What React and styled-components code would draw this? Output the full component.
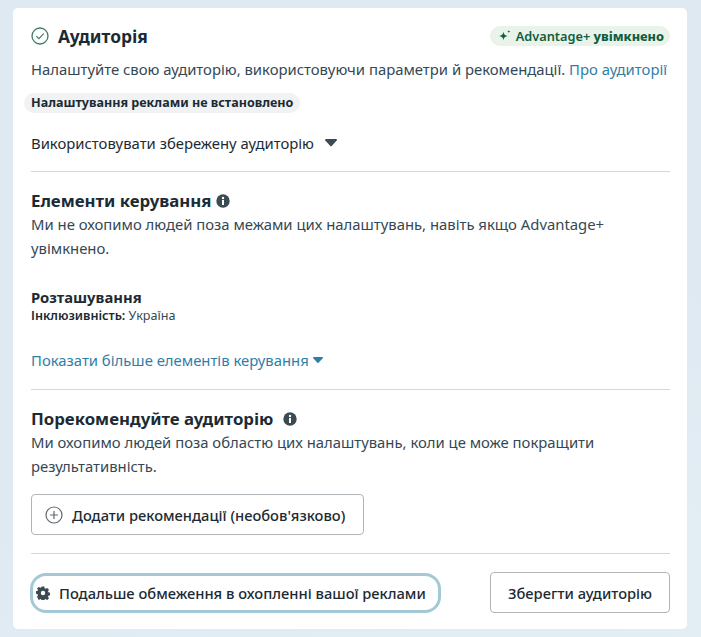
import React from 'react'
import styled, { createGlobalStyle } from 'styled-components'

const GlobalStyle = createGlobalStyle`
  html, body {
    margin: 0;
    height: 100%;
  }
  body {
    background: linear-gradient(160deg, #dfe9f2 0%, #dfe9f2 55%, #e3eef4 100%);
    font-family: "Noto Sans", "Open Sans", sans-serif;
    color: #1c2b33;
  }
`

const Page = styled.div`
  width: 701px;
  height: 637px;
  padding: 8px 14px 8px 13px;
  box-sizing: border-box;
`

const Card = styled.div`
  background: #fff;
  border-radius: 5px;
  height: 621px;
  box-sizing: border-box;
  padding: 16px 17px 0 18px;
`

const TitleRow = styled.div`
  display: flex;
  align-items: center;
  height: 24px;
`

const Title = styled.h2`
  margin: 0 0 0 9px;
  font-size: 17.4px;
  line-height: 24px;
  font-weight: 700;
  flex: 1;
`

const GreenPill = styled.div`
  display: flex;
  align-items: center;
  gap: 5px;
  height: 20px;
  padding: 0 6px 0 8px;
  border-radius: 10px;
  background: #e9f3ea;
  color: #0e5e3f;
  font-size: 12.75px;
  font-weight: 600;
`

const PillStrong = styled.span`
  font-weight: 800;
`

const Text = styled.p`
  margin: ${p => p.$margin || 0};
  font-size: 14.85px;
  line-height: 24px;
  color: #344854;
  white-space: nowrap;
`

const TextLink = styled.a`
  color: #2f7ea8;
  text-decoration: none;
`

const StatusPill = styled.div`
  display: inline-block;
  margin: 12px 0 0 -7px;
  padding: 0 7px;
  height: 20px;
  line-height: 20px;
  border-radius: 10px;
  background: #f0f2f4;
  font-size: 12.57px;
  font-weight: 700;
  white-space: nowrap;
`

const SavedRow = styled.div`
  display: flex;
  align-items: center;
  gap: 11px;
  margin-top: 18px;
  height: 24px;
  font-size: 14.85px;
  color: #1c2b33;
`

const Divider = styled.hr`
  border: 0;
  height: 1px;
  background: #d4d8dc;
  margin: ${p => p.$margin};
`

const Heading = styled.h3`
  display: flex;
  align-items: center;
  gap: ${p => p.$gap || 5}px;
  margin: 0;
  font-size: 16.8px;
  line-height: 22px;
  font-weight: 700;
`

const SubHeading = styled.div`
  margin-top: 27px;
  font-size: 14.8px;
  line-height: 20px;
  font-weight: 700;
`

const Note = styled.div`
  font-size: 12.6px;
  line-height: 18px;
  color: #344854;
`

const NoteLabel = styled.span`
  font-weight: 600;
  color: #1c2b33;
`

const ShowMore = styled.a`
  display: flex;
  align-items: center;
  gap: 4px;
  margin-top: 25px;
  font-size: 14.85px;
  line-height: 20px;
  color: #2f7ea8;
`

const OutlineButton = styled.button`
  display: flex;
  align-items: center;
  gap: 9px;
  box-sizing: border-box;
  height: 41px;
  margin-top: ${p => p.$top || 0}px;
  padding: 0 ${p => p.$right || 17}px 0 ${p => p.$left || 17}px;
  border: 1px solid #b0b5b9;
  border-radius: 4px;
  background: #fff;
  font-family: inherit;
  font-size: 14.7px;
  font-weight: 500;
  color: #1c2b33;
  white-space: nowrap;
`

const Footer = styled.div`
  display: flex;
  align-items: center;
  justify-content: space-between;
`

const FocusLink = styled.div`
  display: flex;
  align-items: center;
  gap: 9px;
  box-sizing: border-box;
  height: 40px;
  margin-left: -1px;
  padding: 0 12px 0 3px;
  border: 3px solid #a3c9d4;
  border-radius: 16px;
  font-size: 14.7px;
  font-weight: 500;
  white-space: nowrap;
`

const CheckIcon = () => (
  <svg width="18" height="18" viewBox="0 0 18 18" fill="none">
    <circle cx="9" cy="9" r="8" stroke="#3f7a66" strokeWidth="1.3" />
    <path d="M5.4 9.2l2.5 2.5 4.8-5" stroke="#3f7a66" strokeWidth="1.2" />
  </svg>
)

const SparkIcon = () => (
  <svg width="13" height="13" viewBox="0 0 12 12" fill="#0e5e3f">
    <path d="M5 1.5c.4 2.6 1.4 3.6 4 4-2.6.4-3.6 1.4-4 4-.4-2.600-1.400-3.600-4-4 2.600-.4 3.600-1.400 4-4z" />
    <path d="M10 0c.1.9.5 1.300 1.400 1.400-.9.1-1.300.5-1.400 1.400-.1-.9-.5-1.300-1.400-1.400.9-.1 1.300-.5 1.400-1.400z" />
  </svg>
)

const InfoIcon = () => (
  <svg width="14" height="14" viewBox="0 0 14 14">
    <circle cx="7" cy="7" r="6.7" fill="#3c4a52" />
    <circle cx="7" cy="4" r="1.2" fill="#fff" />
    <rect x="6" y="6" width="2" height="5" fill="#fff" />
  </svg>
)

const Caret = ({ color, w = 12 }) => (
  <svg width={w} height={w * 0.62} viewBox="0 0 12 7.4" fill={color}>
    <path d="M1 0h10c.8 0 1.200.9.7 1.500L6.700 7c-.4.4-1 .4-1.400 0L.3 1.500C-.2.9.2 0 1 0z" />
  </svg>
)

const PlusIcon = () => (
  <svg width="18" height="18" viewBox="0 0 18 18" fill="none" stroke="#5f6a71">
    <circle cx="9" cy="9" r="8" strokeWidth="1.2" />
    <path d="M9 5v8M5 9h8" strokeWidth="1.2" />
  </svg>
)

const GearIcon = () => (
  <svg width="14" height="14" viewBox="0 0 14 14">
    <path
      fill="#3c4a52"
      fillRule="evenodd"
      d="M5.700.5h2.600l.3 1.800 1 .5 1.600-.9 1.800 1.900-1 1.500.4 1 1.700.4v2.600l-1.700.4-.4 1 1 1.500-1.800 1.900-1.600-1-1 .5-.3 1.700H5.700l-.3-1.700-1-.5-1.600 1L1 10.700l1-1.500-.4-1-1.700-.4V5.200l1.700-.4.4-1-1-1.500L2.800.9l1.600.9 1-.5zM7 4.800a2.200 2.200 0 1 0 0 4.400 2.200 2.200 0 0 0 0-4.400z"
    />
  </svg>
)

export default function App() {
  return (
    <Page>
      <GlobalStyle />
      <Card>
        <TitleRow>
          <CheckIcon />
          <Title>Аудиторія</Title>
          <GreenPill>
            <SparkIcon />
            <span>
              Advantage+ <PillStrong>увімкнено</PillStrong>
            </span>
          </GreenPill>
        </TitleRow>
        <Text $margin="9px 0 0">
          Налаштуйте свою аудиторію, використовуючи параметри й рекомендації.{' '}
          <TextLink>Про аудиторії</TextLink>
        </Text>
        <StatusPill>Налаштування реклами не встановлено</StatusPill>
        <SavedRow>
          Використовувати збережену аудиторію
          <Caret color="#3c4a52" />
        </SavedRow>
        <Divider $margin="16px 0 18px" />
        <Heading>
          Елементи керування
          <InfoIcon />
        </Heading>
        <Text>
          Ми не охопимо людей поза межами цих налаштувань, навіть якщо Advantage+
          <br />
          увімкнено.
        </Text>
        <SubHeading>Розташування</SubHeading>
        <Note>
          <NoteLabel>Інклюзивність:</NoteLabel> Україна
        </Note>
        <ShowMore>
          Показати більше елементів керування
          <Caret color="#2f7ea8" w={10} />
        </ShowMore>
        <Divider $margin="19px 0 18px" />
        <Heading $gap={10}>
          Порекомендуйте аудиторію
          <InfoIcon />
        </Heading>
        <Text>
          Ми охопимо людей поза областю цих налаштувань, коли це може покращити
          <br />
          результативність.
        </Text>
        <OutlineButton $top={16} $left={13} $right={18}>
          <PlusIcon />
          Додати рекомендації (необов'язково)
        </OutlineButton>
        <Divider $margin="18px 0" />
        <Footer>
          <FocusLink>
            <GearIcon />
            Подальше обмеження в охопленні вашої реклами
          </FocusLink>
          <OutlineButton>Зберегти аудиторію</OutlineButton>
        </Footer>
      </Card>
    </Page>
  )
}
